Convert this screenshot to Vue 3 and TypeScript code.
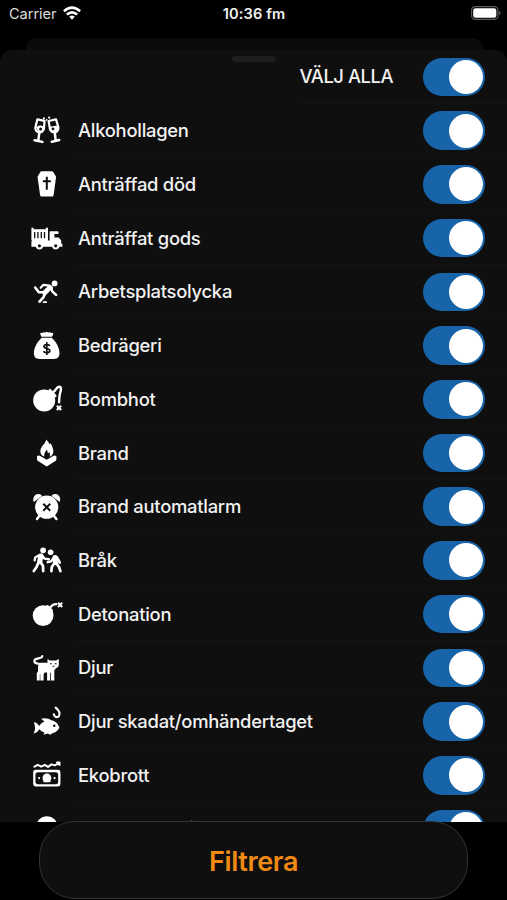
<script setup lang="ts">
import { ref } from 'vue'

interface Category {
  label: string
  icon: string
  on: boolean
}

const bg = '#0f0f0f'

const icons: Record<string, string> = {
  glasses: `
    <g fill="none" stroke="currentColor" stroke-width="2.2" stroke-linejoin="round" stroke-linecap="round">
      <path d="M6.3 4.4 13.6 5.8 12.8 14.2Q11.3 18 7.7 17.3 4 16.4 4.4 12.4Z"/>
      <path d="M17.6 6 25 4.4 27.4 12.2Q27.7 16.3 24.3 17.4 20.6 18 19 14.4Z"/>
      <path d="M8.3 17.6 7.4 25M3.6 25.2 11.4 26.9M23.8 17.6 24.6 25M20.8 26.7 28.2 25" stroke-width="2.5"/>
    </g>
    <path d="M5 12 9 10.2 13 11.4 12 16.6 7.5 17.4ZM18.4 11.8 26.6 10.4 27.4 14.5 24 17.4 20 16Z" fill="currentColor"/>
    <circle cx="9.6" cy="13.9" r="1.5" fill="${bg}"/>
    <circle cx="22" cy="13.9" r="1.4" fill="${bg}"/>
    <g fill="currentColor"><circle cx="12.9" cy="3.4" r="1.1"/><circle cx="18.2" cy="2.7" r="1.1"/><circle cx="15.7" cy="4.8" r=".9"/></g>`,
  coffin: `
    <path fill="currentColor" d="M10.7 3.3H20.8Q21.7 3.3 22.2 4L24.8 8.3Q25.1 8.9 25 9.6L22.6 27.3Q22.4 28.6 21 28.6H10.6Q9.3 28.6 9.1 27.3L6.6 9.6Q6.5 8.9 6.8 8.3L9.3 4Q9.8 3.3 10.7 3.3Z"/>
    <path d="M15.8 8.8V21.8M11.8 13.3H19.8" fill="none" stroke="${bg}" stroke-width="2"/>`,
  truck: `
    <path fill="currentColor" d="M.4 5.7H2.6V7.2H14.8V5.7H17V18.6H18.6V10Q18.6 9.3 19.4 9.3H26.7Q27.8 9.3 27.6 10.5L27.3 12H23.4V15.5H27.6L30.2 18.3V21.7H31.4V24.7H28.6A4.1 4.1 0 0 1 20.9 24.7H12.3A4.1 4.1 0 0 1 4.6 24.7H.4V19.5L1.4 18.6H.4Z"/>
    <path d="M3.7 10V16.2M6.9 10V16.2M10.3 10V16.2M13.5 10V16.2" stroke="${bg}" stroke-width="1.3"/>
    <circle cx="8.4" cy="23.8" r="1.6" fill="${bg}"/><circle cx="24.7" cy="23.8" r="1.6" fill="${bg}"/>`,
  fall: `
    <circle cx="23.6" cy="7.4" r="2.9" fill="currentColor"/>
    <g fill="none" stroke="currentColor" stroke-linecap="round" stroke-linejoin="round">
      <path d="M19 11.4 13.7 16.7" stroke-width="5"/>
      <path d="M18.4 9.7 12.4 8.8 9.7 11.8" stroke-width="2.2"/>
      <path d="M20.5 11.3 21.2 15.4 25.2 19" stroke-width="2.4"/>
      <path d="M12.7 16.2 7.8 16.3 4.2 11.5" stroke-width="2.6"/>
      <path d="M14 17.4 12.4 21.3 8.5 25.6" stroke-width="2.7"/>
      <path d="M12.6 26.2H15.2" stroke-width="1.7"/>
    </g>`,
  bag: `
    <path fill="currentColor" d="M9.2 2.7Q11 3.4 12.6 2.2 14.2 3 15.7 1.8 17.3 3 18.9 2.2 20.5 3.4 22.3 2.7 22.6 4.4 21 6.7H10.5Q8.9 4.4 9.2 2.7ZM10.8 7.8H20.7C24.6 11.2 28.5 17.4 28.5 23.3 28.5 27 26.4 29 23 29H8.5C5 29 2.9 27 2.9 23.3 2.9 17.4 6.8 11.2 10.8 7.8Z"/>
    <path d="M18.8 15.9C18.3 14.3 13 13.8 13 16.6 13 19.2 18.8 17.8 18.8 20.7 18.8 23.4 13.2 23.2 12.7 21.1M15.8 12.3V25" fill="none" stroke="${bg}" stroke-width="1.7"/>`,
  bombWick: `
    <circle cx="13.2" cy="17.4" r="11" fill="currentColor"/>
    <path d="M18.9 7.2 24.2 13" stroke="currentColor" stroke-width="2.6" stroke-linecap="round"/>
    <path d="M22.4 9C25.3 7.5 25.1 3.8 28.2 3.7 31.4 3.9 29.4 9 28.8 11.2Q28.1 15.3 28.1 19.2" fill="none" stroke="currentColor" stroke-width="2.4" stroke-linecap="round"/>
    <path d="M25.9 22.8 30.1 27M30.1 22.8 25.9 27" stroke="currentColor" stroke-width="2.2"/>`,
  fire: `
    <path fill="currentColor" d="M15.2 2.4C16.1 4 17.7 4.5 18 6.2 18.4 7.3 19 7.3 19.6 6.3 21.3 9.4 22.6 12 22.3 15 22 17.6 20.6 19 18.7 19.7 19.2 17.4 18.9 16 18.4 14.9 17.9 15.9 17.2 16.2 16.7 16 16.8 14.4 16.3 13.4 15.5 12.7 15 14.6 12.8 15.8 13.3 19.5 10.6 18.7 9.2 16.8 9.3 13.7 9.6 10.2 12 8.5 13.2 6.7 14.2 5.3 14.8 4.2 15.2 2.4Z"/>
    <path fill="currentColor" d="M6 19.2Q7.6 17.9 9.3 18.9L15.7 22.8 22.2 18.9Q24 17.9 25.4 19.2V22.3Q25.4 23.4 24.4 24L15.7 29.4 7 24Q6 23.4 6 22.3Z"/>`,
  alarm: `
    <g fill="currentColor">
      <path d="M2.7 11C1.4 7.3 3.3 3.3 7 3 9 2.8 10.4 3.7 11 5.1ZM28.8 11C30.1 7.3 28.2 3.3 24.5 3 22.5 2.8 21.1 3.7 20.5 5.1Z"/>
      <circle cx="15.7" cy="16.2" r="11.6"/>
    </g>
    <path d="M8.5 24.8 6 28M22.9 24.8 25.4 28" stroke="currentColor" stroke-width="2.5" stroke-linecap="round"/>
    <path d="M12.3 12.8 19.2 19.7M19.2 12.8 12.3 19.7" stroke="${bg}" stroke-width="2"/>`,
  fight: `
    <g fill="currentColor"><circle cx="12.1" cy="6.3" r="2.9"/><circle cx="19.6" cy="8.3" r="2.8"/></g>
    <g fill="none" stroke="currentColor" stroke-linecap="round" stroke-linejoin="round">
      <path d="M9.7 12 8.8 17.6" stroke-width="5.2"/>
      <path d="M10.5 10.8 13.4 14.6 18 15.2" stroke-width="2.4"/>
      <path d="M7.6 11.4 4.2 13.4 3.6 16.5" stroke-width="2.2"/>
      <path d="M7.4 18.6 5.6 23 2.8 27.1M9.8 18.5 12 22 12.2 27.1" stroke-width="2.7"/>
      <path d="M24.3 13.7 24.6 18.4" stroke-width="5.4"/>
      <path d="M23.2 12.8 20.2 17.3 16.7 18.2" stroke-width="2.4"/>
      <path d="M26.1 13.6 28.8 18.6" stroke-width="2.6"/>
      <path d="M23.4 19.3 20.8 23 20.4 27.1M25.2 19.3 28 23 29.4 27.1" stroke-width="2.7"/>
    </g>`,
  bomb: `
    <circle cx="12.1" cy="17.6" r="10.4" fill="currentColor"/>
    <path fill="currentColor" d="M14.8 7.6 17 7 22 12 21 15.5Z"/>
    <path d="M18.5 10.5C20.3 7.7 22.2 6 25.3 6.2" fill="none" stroke="currentColor" stroke-width="2.3" stroke-linecap="round"/>
    <path d="M27 4.8 31.2 9M31.2 4.8 27 9" stroke="currentColor" stroke-width="2"/>`,
  cat: `
    <path d="M11.3 4.1C11.3 7.6 3.3 5.1 3.3 9.1 3.4 12 6.5 11.5 9.2 11.9" fill="none" stroke="currentColor" stroke-width="2.1" stroke-linecap="round"/>
    <path fill="currentColor" d="M16.5 7 18.9 8.6H24.8L27.8 7V13Q27.8 15.5 25 16.2L23.3 18.2V28.6H20V20.7H19.2V28.6H16.1V20.5H13.7L12.6 22.2V28.6H9.3V21.7L8.8 22.5V28.6H5.8V21.1L7 19.5V15Q7 11 10.6 10.8H16.5Z"/>
    <path d="M19 11.7H20.8M23.7 11.7H25.5M21.6 14.2H23.4" stroke="${bg}" stroke-width="1.1"/>`,
  fish: `
    <path fill="currentColor" d="M2.7 16.2Q6.2 16.4 8.2 20C10 17.5 11.6 16.3 13.5 15.6L10 12.7Q16.2 11.4 20.5 14.2C25.6 15.4 27.4 18.5 28.4 21.7 27 24.9 24.5 26.2 21.8 27.1L19.2 28.8 16.8 27.4 12.6 28.8 13.5 26.4C11 25.7 9.5 24.5 8.2 23.2 6.5 26.3 5 27 2.5 27.5 3.6 25.5 4.1 23.6 4 21.8 4 19.8 3.6 18 2.7 16.2Z"/>
    <circle cx="23.3" cy="19.8" r="1.2" fill="${bg}"/>
    <path d="M24.7 1.6C28.2 4.6 29.7 7.4 27.8 10.3 26.1 12 23 10.9 22.8 8.2" fill="none" stroke="currentColor" stroke-width="2.1" stroke-linecap="round"/>`,
  money: `
    <rect x="3.3" y="12" width="25" height="14.4" rx="1.3" fill="none" stroke="currentColor" stroke-width="2.3"/>
    <path fill="currentColor" d="M3 12H7.5L3 16ZM28.7 12H24.2L28.7 16ZM3 26.4H7.5L3 22.4ZM28.7 26.4H24.2L28.7 22.4Z"/>
    <circle cx="15.9" cy="18.9" r="4.4" fill="currentColor"/>
    <path fill="currentColor" d="M12.4 21H19.4V23.2H12.4Z"/>
    <circle cx="8.1" cy="19.1" r="1.1" fill="currentColor"/><circle cx="23.6" cy="19.1" r="1.1" fill="currentColor"/>
    <path d="M3.5 7.7 6.7 5.9 10.2 7.7 13.8 5.9 17 7.9 20.5 5.4 23.8 6.4 28 4.2M26 3.6H28.5V6" fill="none" stroke="currentColor" stroke-width="2" stroke-linejoin="round" stroke-linecap="round"/>`,
  disc: `<circle cx="15.9" cy="13.8" r="10.6" fill="currentColor"/>`
}

const categories = ref<Category[]>([
  { label: 'Alkohollagen', icon: 'glasses', on: true },
  { label: 'Anträffad död', icon: 'coffin', on: true },
  { label: 'Anträffat gods', icon: 'truck', on: true },
  { label: 'Arbetsplatsolycka', icon: 'fall', on: true },
  { label: 'Bedrägeri', icon: 'bag', on: true },
  { label: 'Bombhot', icon: 'bombWick', on: true },
  { label: 'Brand', icon: 'fire', on: true },
  { label: 'Brand automatlarm', icon: 'alarm', on: true },
  { label: 'Bråk', icon: 'fight', on: true },
  { label: 'Detonation', icon: 'bomb', on: true },
  { label: 'Djur', icon: 'cat', on: true },
  { label: 'Djur skadat/omhändertaget', icon: 'fish', on: true },
  { label: 'Ekobrott', icon: 'money', on: true },
  { label: 'Farligt föremål', icon: 'disc', on: true }
])

const all = ref(true)

function toggleAll(): void {
  all.value = !all.value
  categories.value.forEach((c) => (c.on = all.value))
}
</script>

<template>
  <div class="screen">
    <header class="status">
      <div class="carrier">
        <span>Carrier</span>
        <svg class="wifi" viewBox="0 0 18 14" aria-hidden="true">
          <g fill="none" stroke="#fff" stroke-width="2.6">
            <path d="M.9 5.2Q9-1.9 17.1 5.2" />
            <path d="M3.8 8.6Q9 4.2 14.2 8.6" />
          </g>
          <path d="M6.2 10.8Q9 8.3 11.8 10.8L9 13.7Z" fill="#fff" />
        </svg>
      </div>
      <div class="time">10:36 fm</div>
      <div class="battery-wrap">
        <svg class="battery" viewBox="0 0 30 14" aria-hidden="true">
          <rect x=".6" y=".6" width="26.3" height="12.8" rx="3.6" fill="none" stroke="#5c5c5c" stroke-width="1.2" />
          <rect x="2.2" y="2.2" width="23.1" height="9.6" rx="2.2" fill="#fff" />
          <path d="M28.1 4.8Q29.7 5.5 29.7 7T28.1 9.2Z" fill="#5c5c5c" />
        </svg>
      </div>
    </header>

    <div class="back-sheet"></div>
    <main class="sheet">
      <div class="grabber"></div>
      <div class="row head">
        <span class="label">VÄLJ ALLA</span>
        <button class="toggle" :class="{ on: all }" aria-label="VÄLJ ALLA" @click="toggleAll"><i></i></button>
      </div>
      <div v-for="c in categories" :key="c.label" class="row">
        <svg class="icon" viewBox="0 0 32 32" aria-hidden="true" v-html="icons[c.icon]"></svg>
        <span class="label">{{ c.label }}</span>
        <button class="toggle" :class="{ on: c.on }" :aria-label="c.label" @click="c.on = !c.on"><i></i></button>
      </div>
    </main>

    <footer class="footer">
      <button class="filter">Filtrera</button>
    </footer>
  </div>
</template>

<style>
body {
  background: #000;
}
</style>

<style scoped>
.screen {
  width: 507px;
  height: 900px;
  overflow: hidden;
  display: flex;
  flex-direction: column;
  background: #000;
  color: #f2f2f2;
  font-family: Inter, 'Liberation Sans', sans-serif;
}
.status {
  height: 38px;
  flex: none;
  box-sizing: border-box;
  padding: 4px 6px 0 9px;
  display: grid;
  grid-template-columns: 1fr auto 1fr;
  align-items: start;
  font-size: 14.6px;
  line-height: 20px;
}
.carrier {
  display: flex;
  gap: 6px;
  color: #dcdcdc;
  letter-spacing: -0.05px;
}
.wifi {
  width: 18px;
  height: 14px;
  margin-top: 2px;
}
.time {
  font-weight: 600;
  font-size: 14.6px;
  letter-spacing: 0.1px;
  margin-right: 2px;
}
.battery-wrap {
  display: flex;
  justify-content: flex-end;
}
.battery {
  width: 30px;
  height: 14px;
  margin-top: 2px;
}
.back-sheet {
  flex: none;
  height: 12px;
  margin: 0 24px 0 26px;
  border-radius: 10px 10px 0 0;
  background: #0b0b0b;
}
.sheet {
  position: relative;
  flex: none;
  height: 772px;
  overflow: hidden;
  border-radius: 12px 12px 0 0;
  background: #0f0f0f;
}
.grabber {
  position: absolute;
  top: 6px;
  left: 232px;
  width: 44px;
  height: 6px;
  border-radius: 3px;
  background: #1e1e20;
}
.row {
  position: relative;
  box-sizing: border-box;
  height: 53.74px;
  padding: 0 22px 0 31px;
  display: flex;
  align-items: center;
}
.row::after {
  content: '';
  position: absolute;
  left: 78px;
  right: 0;
  bottom: 0;
  height: 1px;
  background: #141414;
}
.head::after {
  left: 299px;
}
.icon {
  width: 32px;
  height: 32px;
  margin-right: 15px;
  color: #fff;
}
.label {
  flex: 1;
  padding-bottom: 1px;
  font-size: 18.4px;
  font-weight: 500;
  line-height: 24px;
  letter-spacing: -0.26px;
  white-space: nowrap;
}
.head .label {
  text-align: right;
  margin-right: 29.5px;
  letter-spacing: -0.45px;
}
.toggle {
  box-sizing: border-box;
  flex: none;
  width: 62.5px;
  height: 38.5px;
  padding: 2.25px 2px;
  border: 0;
  border-radius: 19.25px;
  display: flex;
  background: #39393d;
}
.toggle.on {
  justify-content: flex-end;
  background: #1864a9;
}
.toggle i {
  width: 34px;
  height: 34px;
  border-radius: 50%;
  background: #fff;
}
.footer {
  flex: none;
  height: 78px;
  padding: 0 39px;
  display: flex;
}
.filter {
  flex: 1;
  box-sizing: border-box;
  height: 78px;
  margin-top: -1px;
  padding: 2px 0 0;
  border: 1px solid #333;
  border-radius: 36px;
  background: #0f0f0f;
  color: #f08a12;
  font-family: inherit;
  font-size: 27px;
  font-weight: 600;
  letter-spacing: -0.35px;
  z-index: 1;
}
</style>
